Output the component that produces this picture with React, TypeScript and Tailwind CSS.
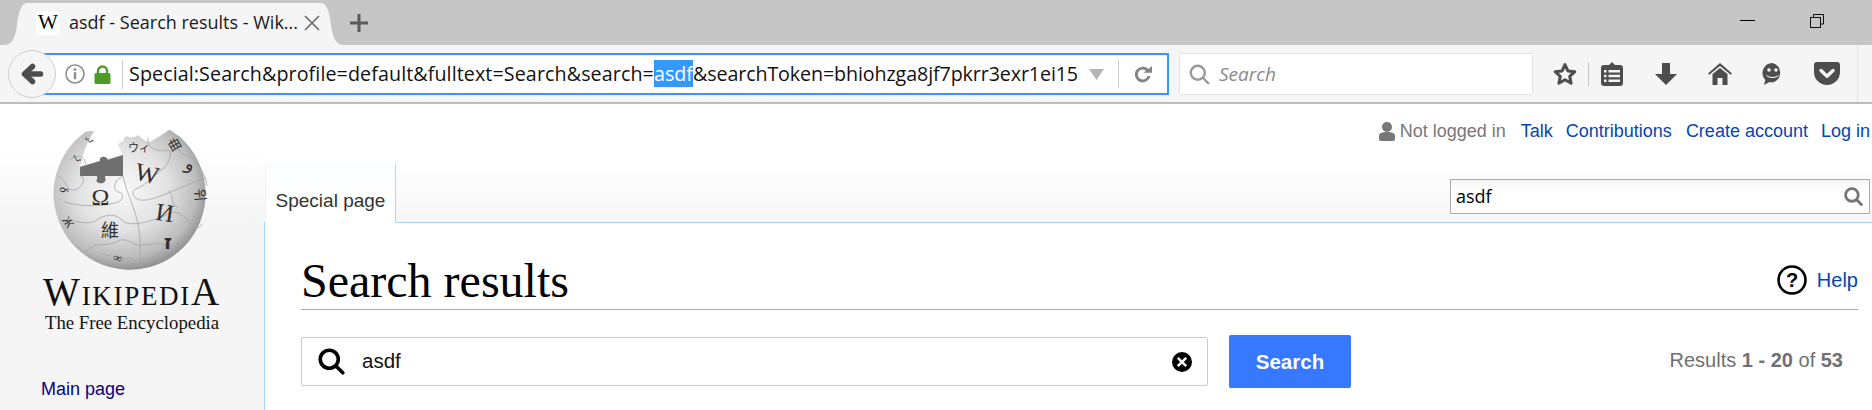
const ICON = '#4d4d4d';

function BackArrow() {
  return (
    <svg width="24" height="24" viewBox="0 0 24 24" fill="none" stroke={ICON} strokeWidth="5.5" strokeLinejoin="round" strokeLinecap="round">
      <path d="M20.5 12H8" />
      <path d="M12.5 4.5L4.5 12l8 7.5" />
    </svg>
  );
}

function InfoIcon() {
  return (
    <svg width="20" height="20" viewBox="0 0 20 20" fill="none">
      <circle cx="10" cy="10" r="9" stroke="#8c8c8c" strokeWidth="1.6" />
      <circle cx="10" cy="5.6" r="1.4" fill="#8c8c8c" />
      <rect x="8.8" y="8.2" width="2.4" height="7" fill="#8c8c8c" />
    </svg>
  );
}

function LockIcon() {
  return (
    <svg width="17" height="19" viewBox="0 0 17 19" fill="none">
      <path d="M4 9V6a4.5 4.5 0 0 1 9 0v3" stroke="#4d9a26" strokeWidth="2.4" />
      <rect x="0.5" y="8" width="16" height="11" rx="1.5" fill="#4d9a26" />
    </svg>
  );
}

function ReloadIcon() {
  return (
    <svg width="19" height="17" viewBox="0 0 19 17" fill="none">
      <path d="M13.5 4.2A6.4 6.4 0 1 0 15 10" stroke="#858585" strokeWidth="3" />
      <path d="M9.5 6.8h8.5V0z" fill="#858585" />
    </svg>
  );
}

function GlassIcon({ size, color, width }: { size: number; color: string; width: number }) {
  return (
    <svg width={size} height={size} viewBox="0 0 24 24" fill="none" stroke={color} strokeWidth={width} strokeLinecap="round">
      <circle cx="10" cy="10" r="8" />
      <path d="M16 16l6 6" />
    </svg>
  );
}

function StarIcon() {
  return (
    <svg width="24" height="24" viewBox="0 0 24 24" fill="none" stroke={ICON} strokeWidth="3" strokeLinejoin="round">
      <path d="M12 2.5l2.9 6.4 6.9.8-5.1 4.7 1.4 6.9-6.1-3.5-6.1 3.5 1.4-6.9-5.1-4.7 6.9-.8z" />
    </svg>
  );
}

function ClipboardIcon() {
  return (
    <svg width="22" height="24" viewBox="0 0 22 24">
      <path d="M3 3h5l3-3 3 3h5a3 3 0 0 1 3 3v15a3 3 0 0 1-3 3H3a3 3 0 0 1-3-3V6a3 3 0 0 1 3-3z" fill={ICON} />
      <path d="M3 8h2.5v2.5H3zM7.5 8H19v2.5H7.5zM3 12.7h2.5v2.5H3zM7.5 12.7H19v2.5H7.5zM3 17.4h2.5v2.5H3zM7.5 17.4H19v2.5H7.5z" fill="#f5f5f5" />
    </svg>
  );
}

function DownloadIcon() {
  return (
    <svg width="22" height="22" viewBox="0 0 22 22">
      <path d="M7 0h8v11h7L11 22 0 11h7z" fill={ICON} />
    </svg>
  );
}

function HomeIcon() {
  return (
    <svg width="24" height="22" viewBox="0 0 24 22">
      <path d="M12 0L24 10.5l-1.2 1.2L12 3 1.2 11.7 0 10.5z" fill={ICON} />
      <path d="M12 5l7.5 6V22H14.5V15h-5v7H4.5V11z" fill={ICON} />
    </svg>
  );
}

function SmileIcon() {
  return (
    <svg width="23" height="22" viewBox="0 0 23 22">
      <path d="M11.5 0a10 10 0 0 1 0 19.5c-1 0-2-.1-3-.4L3 22l1.4-5A10 10 0 0 1 11.5 0z" fill={ICON} />
      <circle cx="8" cy="7" r="1.8" fill="#f5f5f5" />
      <circle cx="15" cy="7" r="1.8" fill="#f5f5f5" />
      <path d="M4.8 11.5c3 3.2 10.4 3.2 13.4 0-1 4.6-12.4 4.6-13.4 0z" fill="#f5f5f5" />
    </svg>
  );
}

function PocketIcon() {
  return (
    <svg width="26" height="23" viewBox="0 0 26 23">
      <path d="M3 0h20a3 3 0 0 1 3 3v7c0 7.500-6 13-13 13S0 17.500 0 10V3a3 3 0 0 1 3-3z" fill={ICON} />
      <path d="M7 8.500l6 5.800 6-5.800" fill="none" stroke="#f5f5f5" strokeWidth="3.4" strokeLinecap="round" strokeLinejoin="round" />
    </svg>
  );
}

function UserIcon() {
  return (
    <svg width="16" height="19" viewBox="0 0 16 19" fill="#777777">
      <circle cx="8" cy="5" r="5" />
      <path d="M0 14c0-3 3-4 8-4s8 1 8 4v3a2 2 0 0 1-2 2H2a2 2 0 0 1-2-2z" />
    </svg>
  );
}

function TabFlare({ flip }: { flip?: boolean }) {
  return (
    <svg width="24" height="42" viewBox="0 0 24 42" className={flip ? '-scale-x-100' : ''}>
      <path d="M0 42C8 42 11 36 13 22 15 8 17 0 24 0V42Z" fill="#f5f5f5" />
    </svg>
  );
}

function Globe() {
  return (
    <svg width="152" height="138" viewBox="0 0 152 138" className="shrink-0 overflow-visible">
      <defs>
        <radialGradient id="sphere" cx="45%" cy="42%" r="60%">
          <stop offset="0%" stopColor="#fafafa" />
          <stop offset="50%" stopColor="#e2e2e2" />
          <stop offset="82%" stopColor="#bcbcbc" />
          <stop offset="100%" stopColor="#8a8a8a" />
        </radialGradient>
      </defs>
      <path
        d="M38 1L32 12 28 22 24 36 67 25 62 15C64 12 66 11 68 11 67 8 70 5 73 7 76 8 80 7 82 5 86 9 90 12 94 12 98 10 100 8 104 6 108 4 110 1 114 0 118 2 120 5 123 6A76 76 0 1 1 30 1.500Z"
        fill="url(#sphere)"
      />
      <path d="M24 37L44 31C43 28 46 26 49 27 52 28 52 30 51 30L67 25 67 46 49 46C49 48 51 51 47 53 43 54 39 52 41 49 42 47 41 46 40 46L24 46Z" fill="#6f6f6f" />
      <g fill="none" stroke="#a4a4a4" strokeWidth="0.8">
        <path d="M67 46C70 60 75 70 78 80 84 96 85 112 84 136" />
        <path d="M67 46C58 50 56 60 62 62 68 62 68 70 62 72 50 76 30 78 8 72" />
        <path d="M92 8C90 20 104 22 112 20 118 22 112 34 108 38 98 46 88 56 82 58 74 60 76 68 84 70 98 72 120 58 150 48" />
        <path d="M122 6C118 18 128 28 134 26 142 34 150 44 151 56" />
        <path d="M2 46C12 50 8 62 20 60 28 56 30 46 24 46" />
        <path d="M10 90C28 92 34 96 44 88 52 84 60 84 66 90 72 98 96 92 112 84 122 78 128 88 136 94 140 98 142 100 146 94" />
        <path d="M30 122C40 110 46 118 60 112 66 108 72 110 78 114 84 118 100 110 116 116" />
        <path d="M112 60C120 66 112 72 122 78" />
        <path d="M14 30C22 24 28 26 30 34" />
        <path d="M42 122C52 126 62 128 72 128 80 126 78 136 88 134" />
      </g>
      <g fontFamily="'Liberation Serif', serif" fill="#2f2f2f" textAnchor="middle">
        <text x="44.500" y="75" fontSize="24">Ω</text>
        <text x="91" y="52" fontSize="25" transform="rotate(14 91 44)">W</text>
        <text x="109" y="91" fontSize="25" transform="rotate(8 109 82)">И</text>
        <text x="54" y="107" fontSize="18" fontFamily="'Noto Sans CJK SC', sans-serif">維</text>
        <text x="83" y="22" fontSize="11" fontFamily="'Noto Sans CJK JP', sans-serif">ウィ</text>
        <text x="112" y="119" fontSize="20" fontWeight="700" fontFamily="'DejaVu Sans', sans-serif">ז</text>
        <text x="134" y="40" fontSize="18" fontFamily="'DejaVu Sans', sans-serif" transform="rotate(20 134 35)">و</text>
        <text x="144" y="70" fontSize="14" fontFamily="'Noto Sans CJK KR', sans-serif" transform="rotate(85 144 65)">위</text>
        <text x="119" y="19" fontSize="13" fontFamily="'Noto Sans CJK SC', sans-serif" transform="rotate(-30 119 15)">曲</text>
        <text x="8" y="64" fontSize="12" transform="rotate(95 8 60)">δ</text>
        <text x="12" y="96" fontSize="12" transform="rotate(55 12 92)">Ж</text>
        <text x="20" y="32" fontSize="10" transform="rotate(-50 20 28)">ζ</text>
        <text x="33" y="13" fontSize="10" transform="rotate(-60 33 10)">ξ</text>
        <text x="62" y="132" fontSize="12" transform="rotate(15 62 128)">∞</text>
      </g>
    </svg>
  );
}

export default function App() {
  return (
    <div className="w-full h-[410px] overflow-hidden bg-white font-['Liberation_Sans',Arial,sans-serif]">
      {/* Tab strip */}
      <div className="h-[45px] bg-[#c6c6c6] flex pt-[3px] pl-[4px] font-['Open_Sans',sans-serif]">
        <TabFlare />
        <div className="w-[294px] -mx-px bg-[#f5f5f5] flex items-center pl-[9px] pb-[3px]">
          <div className="w-[24px] h-[24px] bg-white rounded-[3px] flex items-center justify-center font-['Liberation_Serif',serif] text-[21px] text-black">W</div>
          <span className="ml-[9px] text-[18px] w-[221px] whitespace-nowrap text-[#1a1a1a]">asdf - Search results - Wik...</span>
          <svg width="16" height="16" viewBox="0 0 16 16" stroke="#6a6a6a" strokeWidth="1.6" className="ml-[14px]">
            <path d="M1 1l14 14M15 1L1 15" />
          </svg>
        </div>
        <TabFlare flip />
        <div className="ml-[6px] mt-[11px] h-[18px]">
          <svg width="18" height="18" viewBox="0 0 18 18" fill="#5a5a5a">
            <path d="M7.500 0h3v7.500H18v3h-7.500V18h-3v-7.500H0v-3h7.500z" />
          </svg>
        </div>
        <div className="ml-auto flex items-start pr-[48px] pt-[11px]">
          <div className="w-[15px] h-px bg-black mt-[6px]" />
          <svg width="14" height="14" viewBox="0 0 14 14" fill="none" stroke="#111" strokeWidth="1" className="ml-[55px]">
            <path d="M3.500 3V.5h10v9.500H10.500" />
            <rect x="0.500" y="3.500" width="10" height="10" />
          </svg>
        </div>
      </div>

      {/* Toolbar */}
      <div className="relative h-[59px] bg-[#f5f5f5] border-b-2 border-[#bdbdbd] flex items-start pt-[8px] font-['Open_Sans',sans-serif]">
        <div className="absolute left-[8px] top-[5px] w-[48px] h-[48px] rounded-full border border-[#cfcfcf] bg-[#f5f5f5] flex items-center justify-center z-10">
          <BackArrow />
        </div>
        <div className="ml-[38px] w-[1131px] h-[42px] border-2 border-[#3399ff] bg-white flex items-center">
          <span className="ml-[25px]"><InfoIcon /></span>
          <span className="ml-[9px]"><LockIcon /></span>
          <div className="ml-[11px] w-px h-[29px] bg-[#cccccc]" />
          <div className="ml-[6px] w-[948px] text-[19.7px] text-[#111] whitespace-nowrap overflow-hidden leading-[30px]">
            <span className="tracking-[0.09px]">Special:Search&amp;profile=default&amp;fulltext=Search&amp;search=</span><span className="bg-[#3399ff] text-white">asdf</span><span className="tracking-[-0.12px]">&amp;searchToken=bhiohzga8jf7pkrr3exr1ei15</span>
          </div>
          <svg width="15" height="11" viewBox="0 0 15 11" className="ml-[12px]">
            <path d="M0 0h15L7.500 11z" fill="#b5b5b5" />
          </svg>
          <div className="ml-[14px] w-px h-[28px] bg-[#cccccc]" />
          <span className="ml-[15px] flex"><ReloadIcon /></span>
        </div>
        <div className="ml-[10px] w-[354px] h-[42px] border border-[#e3e3e3] rounded-[2px] bg-white flex items-center pl-[9px]">
          <GlassIcon size={21} color="#9a9a9a" width={2.8} />
          <span className="ml-[9px] text-[19px] italic text-[#8a8a8a]">Search</span>
        </div>
        <div className="ml-[20px] mt-[9px] flex items-start">
          <StarIcon />
          <div className="ml-[11px] w-px h-[24px] bg-[#c4c4c4]" />
          <span className="ml-[12px] flex"><ClipboardIcon /></span>
          <span className="ml-[32px] mt-[1px] flex"><DownloadIcon /></span>
          <span className="ml-[31px] mt-[1px] flex"><HomeIcon /></span>
          <span className="ml-[29px] mt-[1px] flex"><SmileIcon /></span>
          <span className="ml-[30px] flex"><PocketIcon /></span>
        </div>
        <div className="ml-[17px] -mt-[8px] w-px h-[57px] bg-[#e4e4e4]" />
      </div>

      {/* Page */}
      <div className="flex">
        <aside className="w-[264px] shrink-0 h-[306px] bg-gradient-to-b from-white from-[15%] to-[#f5f5f5] to-[39%] flex flex-col items-center pt-[26px]">
          <Globe />
          <div className="mt-[8px] font-['Liberation_Serif',serif] text-[#111] leading-[32px] whitespace-nowrap text-[27px] tracking-[1.7px]">
            <span className="text-[39px]">W</span>IKIPEDI<span className="text-[39px]">A</span>
          </div>
          <div className="font-['Liberation_Serif',serif] text-[#111] text-[18.8px] leading-[22px] whitespace-nowrap">The Free Encyclopedia</div>
          <a className="self-start ml-[41px] mt-[44px] text-[18px] leading-[22px] text-[#0b0080]">Main page</a>
        </aside>

        <main className="flex-1 min-w-0 border-l border-[#a7d7f9]">
          <header className="h-[119px] bg-gradient-to-b from-white from-[50%] to-[#f6f6f6] border-b border-[#a7d7f9] -ml-px flex flex-col">
            <div className="flex items-center justify-end h-[52px] pt-[2px] pr-[2px] text-[18px] text-[#0645ad] whitespace-nowrap">
              <UserIcon />
              <span className="ml-[5px] text-[#777777]">Not logged in</span>
              <a className="ml-[15px]">Talk</a>
              <a className="ml-[13px]">Contributions</a>
              <a className="ml-[14px]">Create account</a>
              <a className="ml-[13px]">Log in</a>
            </div>
            <div className="flex-1 flex justify-between items-end">
              <div className="w-[131px] h-[59px] -mb-px ml-[1px] bg-gradient-to-b from-[#fbfdfe] to-white border-r border-[#a7d7f9] border-l border-l-[#e3f2fd] flex items-center justify-center pt-[16px] text-[19px] text-[#333333]">Special page</div>
              <div className="w-[420px] h-[35px] mr-[2px] mb-[8px] border border-[#aaaaaa] bg-gradient-to-b from-[#f4f4f4] to-white to-[30%] flex items-center justify-between pl-[5px] pr-[6px] font-['Open_Sans',sans-serif] text-[18px] text-black">
                asdf
                <GlassIcon size={19} color="#777777" width={3.6} />
              </div>
            </div>
          </header>

          <div className="pl-[36px] pr-[14px]">
            <div className="h-[87px] border-b border-[#aaaaaa] flex justify-between items-start">
              <h1 className="mt-[30px] font-['Liberation_Serif',serif] text-[48px] leading-[56px] text-black">Search results</h1>
              <div className="mt-[42px] flex items-center">
                <svg width="30" height="30" viewBox="0 0 30 30" fill="none">
                  <circle cx="15" cy="15" r="13.500" stroke="#000" strokeWidth="2.6" />
                  <text x="15" y="22" textAnchor="middle" fontSize="20" fontWeight="700" fill="#000" fontFamily="'Liberation Sans', sans-serif">?</text>
                </svg>
                <a className="ml-[10px] text-[20px] text-[#0645ad]">Help</a>
              </div>
            </div>

            <div className="mt-[25px] flex items-center">
              <div className="w-[907px] h-[49px] border border-[#c8ccd1] rounded-[2px] bg-white flex items-center pl-[16px] pr-[15px] text-[20.500px] text-[#111]">
                <GlassIcon size={27} color="#000000" width={3.2} />
                <span className="ml-[17px]">asdf</span>
                <svg width="20" height="20" viewBox="0 0 19 19" className="ml-auto">
                  <circle cx="9.500" cy="9.500" r="9.500" fill="#000" />
                  <path d="M5.500 5.500l8 8M13.500 5.500l-8 8" stroke="#fff" strokeWidth="2.4" />
                </svg>
              </div>
              <button className="ml-[21px] w-[122px] h-[53px] pt-[1px] bg-[#3679ff] rounded-[2px] text-white font-bold text-[20.500px]">Search</button>
              <div className="ml-auto mr-[15px] mb-[4px] text-[20px] text-[#707070] whitespace-nowrap">
                Results <b>1 - 20</b> of <b>53</b>
              </div>
            </div>
          </div>
        </main>
      </div>
    </div>
  );
}
